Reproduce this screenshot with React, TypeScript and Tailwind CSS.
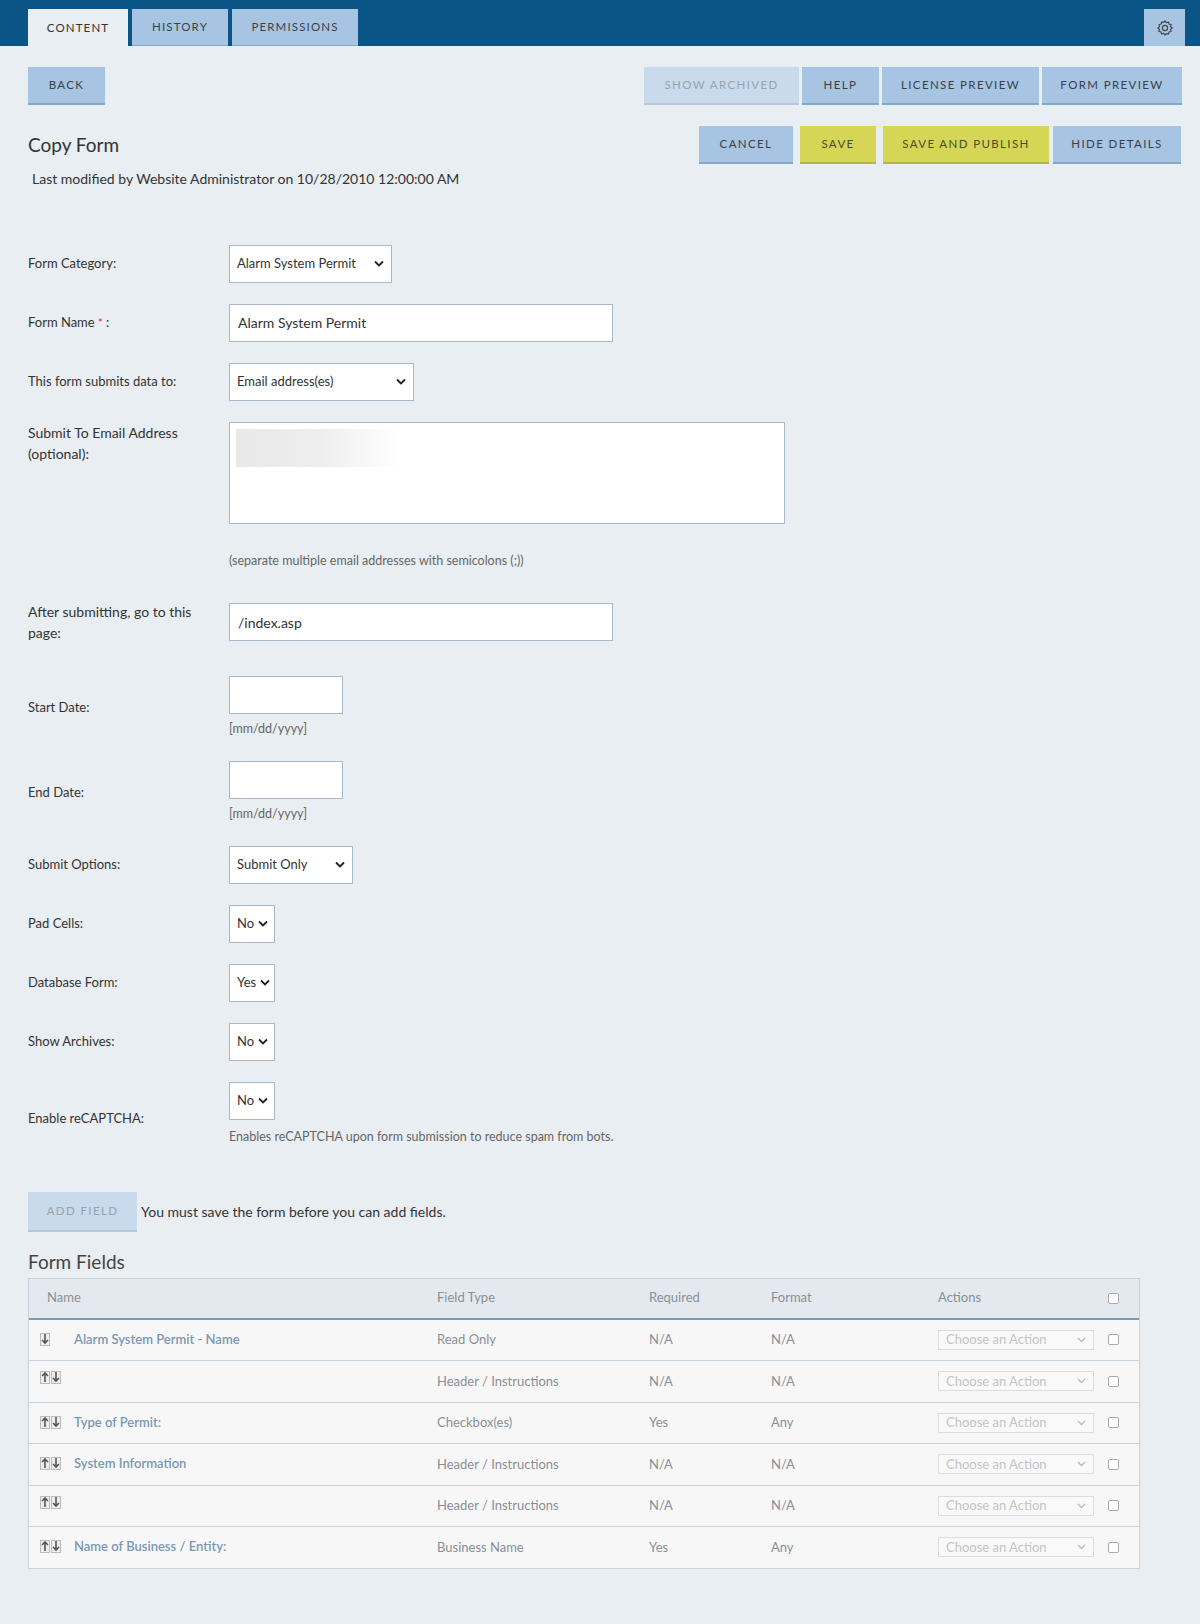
import React from "react";

const btn = "h-[38px] shrink-0 whitespace-nowrap text-[11.5px] tracking-[0.12em] uppercase border-b-2 flex items-center justify-center";
const blue = "bg-[#a7c5e3] border-[#86a8c8] text-[#3a3f4a]";
const yellow = "bg-[#d5d655] border-[#b5b640] text-[#4a4a30]";

function Sel({ w, v }: { w: string; v: string }) {
  return (
    <div className={`${w} h-[38px] shrink-0 bg-white border border-[#a9b7c6] flex items-center justify-between gap-[4px] pl-[7px] pr-[7px] text-[13px] text-[#333] whitespace-nowrap`}>
      <span>{v}</span>
      <svg width="10" height="7" viewBox="0 0 10 7" className="shrink-0"><path d="M1 1.5l4 4 4-4" stroke="#222" strokeWidth="1.8" fill="none" /></svg>
    </div>
  );
}

function Row({ label, children, top = false }: { label: React.ReactNode; children: React.ReactNode; top?: boolean }) {
  return (
    <div className={`flex ${top ? "items-start" : "items-center"}`}>
      <div className="w-[201px] text-[13px] text-[#333] shrink-0 leading-[21px]">{label}</div>
      <div className="shrink-0">{children}</div>
    </div>
  );
}

const Arrows = ({ up }: { up: boolean }) => (
  <div className="flex gap-[1px]">
    {up && (
      <div className="w-[10px] h-[13px] border border-[#bbb] bg-[#eee] flex items-center justify-center">
        <svg width="8" height="11" viewBox="0 0 8 11"><path d="M4 1v9M1 4l3-3 3 3" stroke="#555" strokeWidth="1.6" fill="none" /></svg>
      </div>
    )}
    <div className="w-[10px] h-[13px] border border-[#bbb] bg-[#eee] flex items-center justify-center">
      <svg width="8" height="11" viewBox="0 0 8 11"><path d="M4 0v9M1 6l3 3 3-3" stroke="#555" strokeWidth="1.6" fill="none" /></svg>
    </div>
  </div>
);

const rows = [
  { up: false, name: "Alarm System Permit - Name", type: "Read Only", req: "N/A", fmt: "N/A" },
  { up: true, name: "", type: "Header / Instructions", req: "N/A", fmt: "N/A" },
  { up: true, name: "Type of Permit:", type: "Checkbox(es)", req: "Yes", fmt: "Any" },
  { up: true, name: "System Information", type: "Header / Instructions", req: "N/A", fmt: "N/A" },
  { up: true, name: "", type: "Header / Instructions", req: "N/A", fmt: "N/A" },
  { up: true, name: "Name of Business / Entity:", type: "Business Name", req: "Yes", fmt: "Any" },
];

export default function App() {
  return (
    <div className="w-[1200px] h-[1624px] overflow-hidden bg-[#e9eef2]" style={{ fontFamily: "Lato, 'Open Sans', sans-serif" }}>
      <div className="h-[46px] bg-[#0b5486] flex items-end px-[28px] justify-between">
        <div className="flex gap-[4px]">
          <div className="h-[37px] w-[100px] bg-[#e9eef2] text-[11.5px] tracking-[0.1em] text-[#333] flex items-center justify-center">CONTENT</div>
          <div className="h-[37px] w-[96px] bg-[#a7c5e3] border-b border-[#86a8c8] text-[11.5px] tracking-[0.1em] text-[#3a3f4a] flex items-center justify-center">HISTORY</div>
          <div className="h-[37px] w-[126px] bg-[#a7c5e3] border-b border-[#86a8c8] text-[11.5px] tracking-[0.1em] text-[#3a3f4a] flex items-center justify-center">PERMISSIONS</div>
        </div>
        <div className="h-[37px] w-[41px] bg-[#a7c5e3] mr-[-13px] flex items-center justify-center">
          <svg width="18" height="18" viewBox="0 0 24 24" fill="none" stroke="#444" strokeWidth="1.5"><path d="M12 2.5l1.8 2.2 2.8-.6.8 2.7 2.7.8-.6 2.8 2.2 1.6-2.2 1.8.6 2.8-2.7.8-.8 2.7-2.8-.6L12 21.5l-1.8-2.2-2.8.6-.8-2.7-2.7-.8.6-2.8L2.5 12l2.2-1.8-.6-2.8 2.7-.8.8-2.7 2.8.6z" /><circle cx="12" cy="12" r="3.5" /></svg>
        </div>
      </div>

      <div className="px-[28px]">
        <div className="flex justify-between mt-[21px]">
          <div className={`${btn} ${blue} w-[77px]`}>Back</div>
          <div className="flex gap-[3px] mr-[-10px]">
            <div className={`${btn} bg-[#c8daec] border-[#b4c8dc] text-[#9aa3ad] w-[155px]`}>Show Archived</div>
            <div className={`${btn} ${blue} w-[77px]`}>Help</div>
            <div className={`${btn} ${blue} w-[157px]`}>License Preview</div>
            <div className={`${btn} ${blue} w-[140px]`}>Form Preview</div>
          </div>
        </div>
        <div className="flex justify-between mt-[21px]">
          <div>
            <div className="text-[19px] text-[#333] mt-[5px]">Copy Form</div>
            <div className="text-[14px] text-[#333] mt-[8px] ml-[4px]">Last modified by Website Administrator on 10/28/2010 12:00:00 AM</div>
          </div>
          <div className="flex mr-[-9px]">
            <div className={`${btn} ${blue} w-[94px]`}>Cancel</div>
            <div className={`${btn} ${yellow} w-[76px] ml-[7px]`}>Save</div>
            <div className={`${btn} ${yellow} w-[166px] ml-[7px]`}>Save and Publish</div>
            <div className={`${btn} ${blue} w-[128px] ml-[4px]`}>Hide Details</div>
          </div>
        </div>

        <div className="mt-[56px] flex flex-col">
          <Row label="Form Category:"><Sel w="w-[163px]" v="Alarm System Permit" /></Row>
          <div className="h-[21px]" />
          <Row label={<span>Form Name <span className="text-[#c33] text-[11px] align-top">*</span> :</span>}>
            <div className="w-[384px] h-[38px] bg-white border border-[#a9b7c6] flex items-center px-[8px] text-[14px] text-[#333]">Alarm System Permit</div>
          </Row>
          <div className="h-[21px]" />
          <Row label="This form submits data to:"><Sel w="w-[185px]" v="Email address(es)" /></Row>
          <div className="h-[21px]" />
          <Row top label={<span className="text-[14px] leading-[21px] block">Submit To Email Address<br />(optional):</span>}>
            <div className="w-[556px] h-[102px] bg-white border border-[#a9b7c6] p-[6px] relative">
              <div className="w-[165px] h-[38px] bg-gradient-to-r from-[#e8e8e8] via-[#eeeeee] to-white" />
            </div>
            <div className="text-[12.5px] text-[#666] mt-[28px]">(separate multiple email addresses with semicolons (;))</div>
          </Row>
          <div className="h-[31px]" />
          <Row label={<span className="text-[14px] block">After submitting, go to this<br />page:</span>}>
            <div className="w-[384px] h-[38px] bg-white border border-[#a9b7c6] flex items-center px-[8px] text-[14px] text-[#333]">/index.asp</div>
          </Row>
          <div className="h-[33px]" />
          <Row label="Start Date:">
            <div className="w-[114px] h-[38px] bg-white border border-[#a9b7c6]" />
            <div className="text-[12.5px] text-[#666] mt-[6px]">[mm/dd/yyyy]</div>
          </Row>
          <div className="h-[22px]" />
          <Row label="End Date:">
            <div className="w-[114px] h-[38px] bg-white border border-[#a9b7c6]" />
            <div className="text-[12.5px] text-[#666] mt-[6px]">[mm/dd/yyyy]</div>
          </Row>
          <div className="h-[22px]" />
          <Row label="Submit Options:"><Sel w="w-[124px]" v="Submit Only" /></Row>
          <div className="h-[21px]" />
          <Row label="Pad Cells:"><Sel w="w-[46px]" v="No" /></Row>
          <div className="h-[21px]" />
          <Row label="Database Form:"><Sel w="w-[46px]" v="Yes" /></Row>
          <div className="h-[21px]" />
          <Row label="Show Archives:"><Sel w="w-[46px]" v="No" /></Row>
          <div className="h-[21px]" />
          <Row label={<span className="block mt-[8px]">Enable reCAPTCHA:</span>}>
            <Sel w="w-[46px]" v="No" />
            <div className="text-[12.5px] text-[#666] mt-[8px]">Enables reCAPTCHA upon form submission to reduce spam from bots.</div>
          </Row>
        </div>

        <div className="flex items-center mt-[45px]">
          <div className={`${btn} bg-[#c8daec] border-[#b4c8dc] text-[#9aa3ad] w-[109px] h-[40px]`}>Add Field</div>
          <span className="text-[14px] text-[#333] ml-[4px]">You must save the form before you can add fields.</span>
        </div>

        <div className="text-[19px] text-[#444] mt-[16px] h-[26px]">Form Fields</div>
        <div className="w-[1112px] h-[4px] bg-[#edf0f3]" />
        <div className="w-[1112px] border border-[#c9d3dc] border-b-0">
          <div className="h-[41px] bg-[#e4e9ef] border-b-2 border-[#7b9bb5] flex items-center text-[13px] text-[#8a8f96]">
            <div className="w-[408px] pl-[18px]">Name</div>
            <div className="w-[212px]">Field Type</div>
            <div className="w-[122px]">Required</div>
            <div className="w-[167px]">Format</div>
            <div className="w-[170px]">Actions</div>
            <div className="w-[11px] h-[11px] border border-[#aaa] rounded-[2px] bg-white" />
          </div>
          {rows.map((r, i) => (
            <div key={i} className="h-[41.5px] bg-[#f7f7f7] border-b border-[#c9d3dc] flex items-center text-[13px] text-[#8a8f96]">
              <div className="w-[408px] pl-[11px] flex items-center self-start pt-[10px]">
                <div className="w-[34px]"><Arrows up={r.up} /></div>
                <span className="text-[#7a98b5] font-semibold">{r.name}</span>
              </div>
              <div className="w-[212px]">{r.type}</div>
              <div className="w-[122px]">{r.req}</div>
              <div className="w-[167px]">{r.fmt}</div>
              <div className="w-[170px]">
                <div className="w-[156px] h-[20px] border border-[#dcdcdc] bg-[#f9f9f9] flex items-center justify-between px-[7px] text-[13px] text-[#c4c4c4]">
                  <span>Choose an Action</span>
                  <svg width="9" height="6" viewBox="0 0 9 6"><path d="M1 1l3.5 3.5L8 1" stroke="#bbb" strokeWidth="1.4" fill="none" /></svg>
                </div>
              </div>
              <div className="w-[11px] h-[11px] border border-[#aaa] rounded-[2px] bg-white" />
            </div>
          ))}
        </div>
      </div>
    </div>
  );
}
